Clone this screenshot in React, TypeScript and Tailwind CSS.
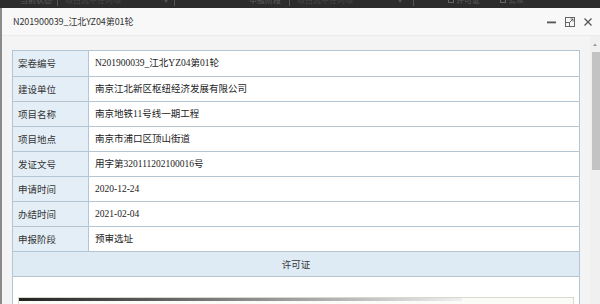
import React from "react";

const rows: [string, string][] = [
  ["案卷编号", "N201900039_江北YZ04第01轮"],
  ["建设单位", "南京江北新区枢纽经济发展有限公司"],
  ["项目名称", "南京地铁11号线一期工程"],
  ["项目地点", "南京市浦口区顶山街道"],
  ["发证文号", "用字第320111202100016号"],
  ["申请时间", "2020-12-24"],
  ["办结时间", "2021-02-04"],
  ["申报阶段", "预审选址"],
];

const sans = { fontFamily: '"Noto Sans CJK SC", "Liberation Sans", sans-serif' };
const serif = { fontFamily: '"Liberation Serif", "Noto Sans CJK SC", serif' };

export default function App() {
  return (
    <div className="w-[600px] h-[304px] overflow-hidden bg-[#8a8a8a] flex flex-col" style={sans}>
      {/* backdrop strip */}
      <div className="h-[8px] shrink-0 bg-[#2c2c2c] overflow-hidden relative">
        <div className="flex items-center h-[12px] -mt-[6px] text-[8px] text-[#5c5c5c] leading-none whitespace-nowrap">
          <span className="ml-[20px]">当前状态</span>
          <span className="ml-[5px] w-px h-[12px] bg-[#555]" />
          <span className="ml-[7px] text-[#4a4a4a]">项目选中任何项</span>
          <span className="ml-[42px] text-[6px] text-[#555]">▼</span>
          <span className="ml-[5px] w-px h-[12px] bg-[#555]" />
          <span className="ml-[74px]">申报阶段</span>
          <span className="ml-[8px] w-px h-[12px] bg-[#555]" />
          <span className="ml-[7px] text-[#4a4a4a]">项目选中任何项</span>
          <span className="ml-[44px] text-[6px] text-[#555]">▼</span>
          <span className="ml-[10px] w-px h-[12px] bg-[#555]" />
          <span className="ml-[34px] w-[6px] h-[6px] border border-[#666]" />
          <span className="ml-[2px]">许可证</span>
          <span className="ml-[20px] w-[6px] h-[6px] border border-[#666]" />
          <span className="ml-[2px]">公众</span>
        </div>
      </div>
      {/* dialog */}
      <div className="flex-1 ml-[2px] bg-[#f4f4f4] flex flex-col min-h-0">
        <div className="h-[28px] shrink-0 bg-[#f8f8f8] border-b border-[#ececec] flex items-center pl-[11px] pr-[10px]">
          <span className="text-[9px] text-[#333] tracking-[-0.1px]">N201900039_江北YZ04第01轮</span>
          <div className="ml-auto flex items-center gap-[6px] mr-[-4px]">
            <svg width="12" height="12" viewBox="0 0 12 12">
              <rect x="1" y="5.5" width="9" height="1.8" fill="#555" />
            </svg>
            <svg width="12" height="12" viewBox="0 0 12 12" fill="none" stroke="#666" strokeWidth="1">
              <rect x="1.5" y="1.5" width="9" height="9" />
              <path d="M5 7 L9 3 M6.5 3 H9 V5.5" />
              <rect x="1.5" y="6.5" width="4" height="4" fill="#f8f8f8" />
            </svg>
            <svg width="12" height="12" viewBox="0 0 12 12" stroke="#555" strokeWidth="1.3">
              <path d="M2.5 2.5 L9.5 9.5 M9.5 2.5 L2.5 9.5" />
            </svg>
          </div>
        </div>
        <div className="flex-1 flex min-h-0">
          <div className="flex-1 pl-[10px] pr-[10px] pt-[14px] overflow-hidden">
            <div className="border border-[#b4c5d3] bg-white">
              {rows.map(([k, v], i) => (
                <div key={k} className={`flex h-[25px] ${i > 0 ? "border-t border-[#b4c5d3]" : ""}`}>
                  <div className="w-[76px] shrink-0 bg-[#e4eef6] border-r border-[#b4c5d3] flex items-center pl-[5px] text-[9.5px] text-[#333]">
                    {k}
                  </div>
                  <div className="flex-1 flex items-center pl-[6px] text-[9.5px] text-[#222]" style={serif}>
                    {v}
                  </div>
                </div>
              ))}
              <div className="h-[25px] border-t border-[#b4c5d3] bg-[#dfebf4] flex items-center justify-center text-[9.5px] text-[#333]">
                许可证
              </div>
              <div className="border-t border-[#b4c5d3] h-[60px] pt-[20px] px-[5px]">
                <div className="h-[40px] border border-[#d8d8cc] bg-[#fbfbf8]">
                  <div className="h-[3px] w-[80%] bg-gradient-to-r from-[#222] via-[#888] to-[#f0f0f0]" />
                </div>
              </div>
            </div>
          </div>
          <div className="w-[10px] shrink-0 bg-[#f0f0f0] flex flex-col items-center">
            <svg width="10" height="14" viewBox="0 0 10 14" className="mt-[2px]">
              <path d="M3 8 L5 5.5 L7 8 Z" fill="#999" />
            </svg>
            <div className="w-[8px] ml-[2px] h-[118px] bg-[#c3c3c3]" />
          </div>
        </div>
      </div>
    </div>
  );
}
